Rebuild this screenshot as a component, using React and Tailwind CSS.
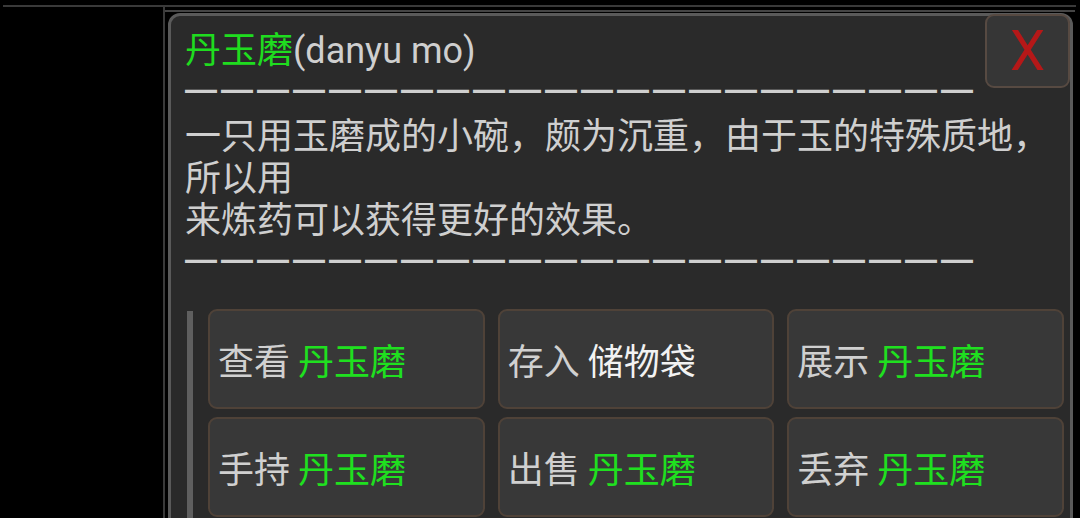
const CJK = "font-['Noto_Sans_CJK_SC',sans-serif]";

const actions = [
  { verb: "查看", obj: "丹玉磨", green: true },
  { verb: "存入", obj: "储物袋", green: false },
  { verb: "展示", obj: "丹玉磨", green: true },
  { verb: "手持", obj: "丹玉磨", green: true },
  { verb: "出售", obj: "丹玉磨", green: true },
  { verb: "丢弃", obj: "丹玉磨", green: true },
];

const Dashes = () => (
  <div className="font-['Liberation_Sans',sans-serif] font-bold text-[32px] tracking-[4px] text-[#cfcfcf] h-[42px] leading-[42px] whitespace-nowrap">
    {"—".repeat(22)}
  </div>
);

const App = () => {
  return (
    <div className="w-[1080px] h-[518px] bg-black overflow-hidden">
      {/* top rule */}
      <div className="pt-[5px]">
        <div className="ml-[3px] mr-[4px] h-[2px] bg-[#3a3a3a]" />
      </div>

      <div className="flex h-[520px]">
        <div className="w-[163px] shrink-0" />
        <div className="flex-1 border-l-2 border-[#3a3a3a] pt-[3px]">
          <div className="h-[2px] bg-[#454545] mr-[5px]" />

          {/* item panel */}
          <div className="relative ml-[3px] mt-[1px] w-[905px] h-[520px] rounded-t-[12px] border-[3px] border-[#5a5a5a] bg-[#2a2a2a] pt-[10px]">
            <button className="absolute top-[-2px] right-0 w-[85px] h-[74px] rounded-[9px] border-2 border-[#574a42] bg-[#363636] flex items-center justify-center">
              <span className="font-['Roboto',sans-serif] text-[56px] leading-none text-[#b51818]">
                X
              </span>
            </button>

            <div className="pl-[14px] text-[36px] leading-[42px] text-[#cfcfcf]">
              <div className="h-[42px]">
                <span className={`${CJK} text-[#1fdc1f]`}>丹玉磨</span>
                <span className="font-['Roboto',sans-serif]">(danyu mo)</span>
              </div>
              <Dashes />
              <div className={`${CJK} pt-[2px]`}>
                一只用玉磨成的小碗，颇为沉重，由于玉的特殊质地，
                <br />
                所以用
                <br />
                来炼药可以获得更好的效果。
              </div>
              <Dashes />
            </div>

            {/* actions */}
            <div className="flex items-start mt-[29px] pl-[16px]">
              <div className="w-[6px] h-[230px] mt-[2px] bg-[#5f5f5f] shrink-0" />
              <div className="ml-[15px] w-[856px] grid grid-cols-3 gap-x-[13px] gap-y-[8px]">
                {actions.map((a) => (
                  <button
                    key={a.verb}
                    className={`${CJK} h-[100px] rounded-[9px] border-2 border-[#4f4238] bg-[#383838] pl-[8px] text-left text-[36px] text-[#d0d0d0] flex items-center`}
                  >
                    <span>{a.verb}</span>
                    <span
                      className={`ml-[8px] ${a.green ? "text-[#1fe01f]" : "text-[#f2f2f2]"}`}
                    >
                      {a.obj}
                    </span>
                  </button>
                ))}
              </div>
            </div>
          </div>
        </div>
      </div>
    </div>
  );
};

export default App;
